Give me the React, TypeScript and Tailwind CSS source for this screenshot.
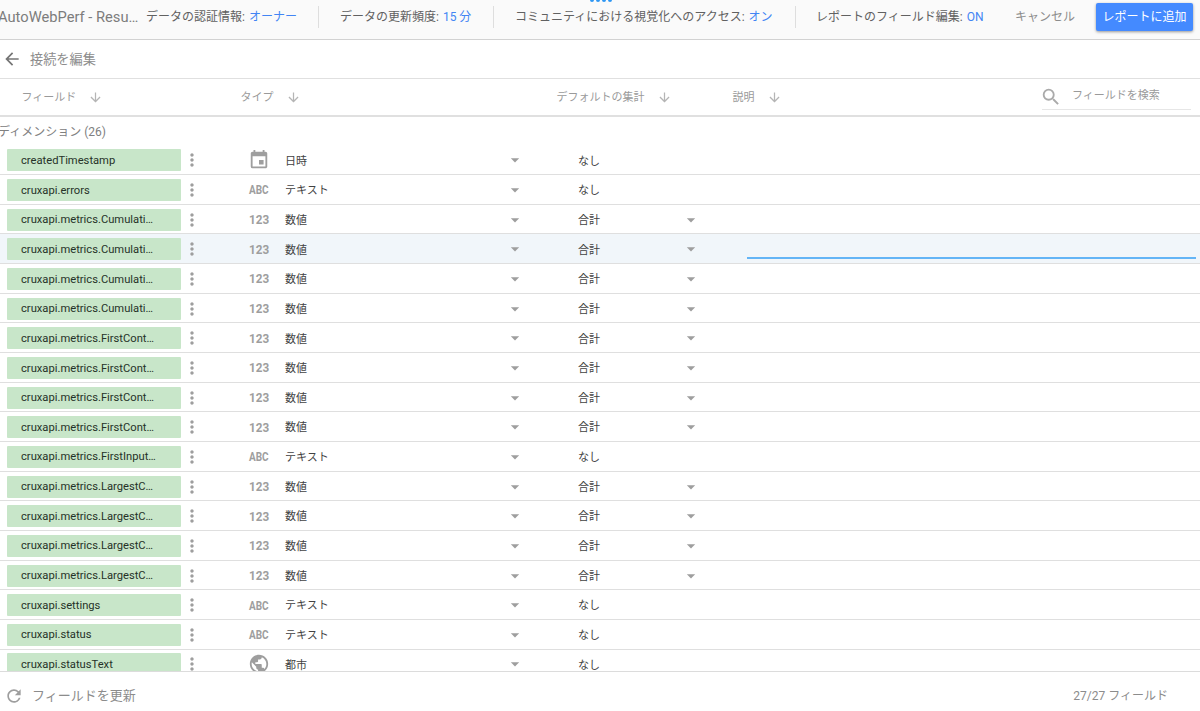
import { clsx } from "clsx";
import {
  MdArrowBack,
  MdArrowDownward,
  MdArrowDropDown,
  MdMoreVert,
  MdPublic,
  MdRefresh,
  MdSearch,
  MdInsertInvitation,
} from "react-icons/md";

type FieldType = "date" | "text" | "number" | "city";

interface Field {
  name: string;
  type: FieldType;
  active?: boolean;
}

const TYPE_LABELS: Record<FieldType, string> = {
  date: "日時",
  text: "テキスト",
  number: "数値",
  city: "都市",
};

const fields: Field[] = [
  { name: "createdTimestamp", type: "date" },
  { name: "cruxapi.errors", type: "text" },
  { name: "cruxapi.metrics.Cumulati…", type: "number" },
  { name: "cruxapi.metrics.Cumulati…", type: "number", active: true },
  { name: "cruxapi.metrics.Cumulati…", type: "number" },
  { name: "cruxapi.metrics.Cumulati…", type: "number" },
  { name: "cruxapi.metrics.FirstCont…", type: "number" },
  { name: "cruxapi.metrics.FirstCont…", type: "number" },
  { name: "cruxapi.metrics.FirstCont…", type: "number" },
  { name: "cruxapi.metrics.FirstCont…", type: "number" },
  { name: "cruxapi.metrics.FirstInput…", type: "text" },
  { name: "cruxapi.metrics.LargestC…", type: "number" },
  { name: "cruxapi.metrics.LargestC…", type: "number" },
  { name: "cruxapi.metrics.LargestC…", type: "number" },
  { name: "cruxapi.metrics.LargestC…", type: "number" },
  { name: "cruxapi.settings", type: "text" },
  { name: "cruxapi.status", type: "text" },
  { name: "cruxapi.statusText", type: "city" },
];

function TypeIcon({ type }: { type: FieldType }) {
  if (type === "date") return <MdInsertInvitation className="size-[22px] shrink-0" />;
  if (type === "city") return <MdPublic className="size-[22px] shrink-0" />;
  return (
    <span
      className={clsx(
        "text-[13px] leading-none font-bold",
        type === "text" ? "scale-x-[0.77]" : "scale-x-[0.9]"
      )}
    >
      {type === "text" ? "ABC" : "123"}
    </span>
  );
}

function Setting({ label, value, className }: { label: string; value: string; className?: string }) {
  return (
    <div className={clsx("shrink-0 pt-px text-xs text-[#616161]", className)}>
      {label}: <span className="ml-px text-[#4285f4]">{value}</span>
    </div>
  );
}

function ColumnHeader({ label, className }: { label: string; className?: string }) {
  return (
    <div className={clsx("flex shrink-0 items-center", className)}>
      <span className="pt-[3px]">{label}</span>
      <MdArrowDownward className="ml-3 size-[15px] text-[#b5b5b5]" />
    </div>
  );
}

function FieldRow({ field }: { field: Field }) {
  const isNumber = field.type === "number";
  return (
    <div
      className={clsx(
        "flex h-[29.67px] shrink-0 items-center border-b border-[#dfdfdf] pt-px pl-[6.5px] text-[11px] text-[#424242]",
        field.active && "bg-[#f1f6fa]"
      )}
    >
      <div className="flex h-[22px] w-[174.5px] shrink-0 items-center rounded-[1px] bg-[#c8e6c9] pt-[2px] pl-[14.5px] text-[11.2px] text-[#263228]">
        {field.name}
      </div>
      <MdMoreVert className="ml-px size-5 shrink-0 text-[#9e9e9e]" />
      <div className="ml-[45px] flex w-6 shrink-0 items-center justify-center text-[#9e9e9e]">
        <TypeIcon type={field.type} />
      </div>
      <span className="ml-[14px] w-[220px] shrink-0 pt-[3px]">{TYPE_LABELS[field.type]}</span>
      <MdArrowDropDown className="size-5 shrink-0 text-[#9e9e9e]" />
      <span className="ml-[53px] w-[103px] shrink-0 pt-[3px]">{isNumber ? "合計" : "なし"}</span>
      {isNumber && <MdArrowDropDown className="size-5 shrink-0 text-[#9e9e9e]" />}
      {field.active && (
        <div className="mr-1 ml-[46px] h-[24px] flex-1 self-start border-b-2 border-[#64b5f6]" />
      )}
    </div>
  );
}

export default function App() {
  return (
    <div className="flex h-[711px] w-[1200px] flex-col overflow-hidden bg-white font-[Roboto,'Noto_Sans_CJK_JP',sans-serif] whitespace-nowrap">
      {/* Top bar */}
      <header className="relative flex h-10 shrink-0 items-center border-b border-[#d2d2d2] bg-[#fafafa] pb-[6px]">
        <div className="absolute top-0 left-[590px] flex gap-[2.5px]">
          {[0, 1, 2, 3].map((i) => (
            <span key={i} className="h-[2px] w-[3.5px] rounded-b-full bg-[#2f97f3]" />
          ))}
        </div>
        <div className="-ml-[2px] w-[148px] shrink-0 pt-px text-[14.7px] text-[#7d7d7d]">
          AutoWebPerf - Resu…
        </div>
        <Setting label="データの認証情報" value="オーナー" className="w-[172px]" />
        <div className="h-[22px] w-px shrink-0 bg-[#dedede]" />
        <Setting label="データの更新頻度" value="15 分" className="ml-[21px] w-[153px]" />
        <div className="h-[22px] w-px shrink-0 bg-[#dedede]" />
        <Setting label="コミュニティにおける視覚化へのアクセス" value="オン" className="ml-[21px] w-[280px]" />
        <div className="h-[22px] w-px shrink-0 bg-[#dedede]" />
        <Setting label="レポートのフィールド編集" value="ON" className="ml-[20px] w-[199px]" />
        <button type="button" className="shrink-0 pt-px text-xs text-[#8c8c8c]">
          キャンセル
        </button>
        <button
          type="button"
          className="mr-[7px] ml-auto h-7 w-[97px] shrink-0 rounded-[2px] bg-[#448aff] pt-px text-xs text-white shadow-[0_1px_3px_rgba(0,0,0,0.4)]"
        >
          レポートに追加
        </button>
      </header>

      <div className="flex h-[39px] shrink-0 items-center border-b border-[#e0e0e0] pl-[2px]">
        <MdArrowBack className="size-5 text-[#757575]" />
        <span className="ml-2 pt-[2px] text-[13.2px] text-[#8c8c8c]">接続を編集</span>
      </div>

      {/* Column headers */}
      <div className="flex h-[38px] shrink-0 items-center border-b-2 border-[#e0e0e0] pl-[21.5px] text-[11px] text-[#9a9a9a]">
        <ColumnHeader label="フィールド" className="w-[219px]" />
        <ColumnHeader label="タイプ" className="w-[316px]" />
        <ColumnHeader label="デフォルトの集計" className="w-[176px]" />
        <ColumnHeader label="説明" />
        <div className="mt-[-3px] mr-[9px] ml-auto flex h-[29px] w-[149px] items-center self-center border-b border-[#e6e6e6]">
          <MdSearch className="mt-[3px] -ml-[2px] size-[22px] text-[#aaa]" />
          <span className="ml-[10px] pt-[3px]">フィールドを検索</span>
        </div>
      </div>

      {/* Field list */}
      <div className="flex flex-1 flex-col overflow-hidden">
        <div className="flex h-[28.5px] shrink-0 items-center pt-px text-xs text-[#808080]">
          <span className="-ml-[2px]">ディメンション (26)</span>
        </div>
        {fields.map((field, i) => (
          <FieldRow key={i} field={field} />
        ))}
      </div>

      <footer className="flex h-10 shrink-0 items-center justify-between border-t border-[#dcdcdc] pt-[9px] pr-8 pb-[1px] pl-1 text-[#8c8c8c]">
        <div className="flex items-center">
          <MdRefresh className="size-5 text-[#9e9e9e]" />
          <span className="ml-2 text-[13px]">フィールドを更新</span>
        </div>
        <span className="text-xs">27/27 フィールド</span>
      </footer>
    </div>
  );
}
